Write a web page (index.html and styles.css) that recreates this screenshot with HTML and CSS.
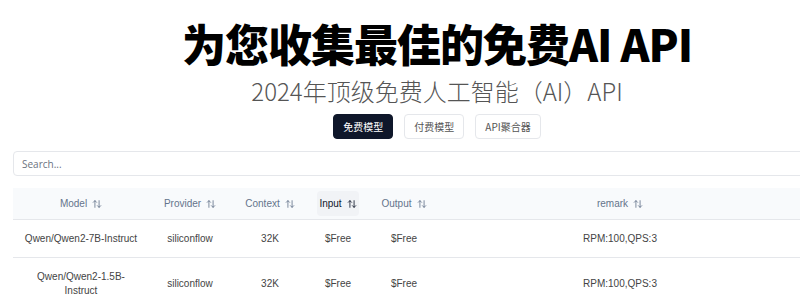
FILE: index.html
```html
<!DOCTYPE html>
<html lang="zh-CN">
  <head>
    <meta charset="UTF-8" />
    <meta name="viewport" content="width=device-width, initial-scale=1.0" />
    <title>免费AI API</title>
    <link rel="stylesheet" href="styles.css">
  </head>
  <body>
    <div class="container">
      <h1 class="title">为您收集最佳的免费AI API</h1>
      <p class="subtitle">2024年顶级免费人工智能（AI）API</p>

      <div class="tabs">
        <button class="tab active">免费模型</button>
        <button class="tab">付费模型</button>
        <button class="tab">API聚合器</button>
      </div>

      <input type="text" class="search-box" placeholder="Search..." />

      <table class="models">
        <colgroup>
          <col style="width: 136px" />
          <col style="width: 82px" />
          <col style="width: 78px" />
          <col style="width: 58px" />
          <col style="width: 74px" />
          <col style="width: 358px" />
          <col />
        </colgroup>
        <thead>
          <tr>
            <th><span class="sort">Model <svg class="sort-icon" viewBox="0 0 24 24"><path d="m21 16-4 4-4-4M17 20V4M3 8l4-4 4 4M7 4v16"/></svg></span></th>
            <th><span class="sort">Provider <svg class="sort-icon" viewBox="0 0 24 24"><path d="m21 16-4 4-4-4M17 20V4M3 8l4-4 4 4M7 4v16"/></svg></span></th>
            <th><span class="sort">Context <svg class="sort-icon" viewBox="0 0 24 24"><path d="m21 16-4 4-4-4M17 20V4M3 8l4-4 4 4M7 4v16"/></svg></span></th>
            <th><span class="sort hover">Input <svg class="sort-icon" viewBox="0 0 24 24"><path d="m21 16-4 4-4-4M17 20V4M3 8l4-4 4 4M7 4v16"/></svg></span></th>
            <th><span class="sort">Output <svg class="sort-icon" viewBox="0 0 24 24"><path d="m21 16-4 4-4-4M17 20V4M3 8l4-4 4 4M7 4v16"/></svg></span></th>
            <th><span class="sort">remark <svg class="sort-icon" viewBox="0 0 24 24"><path d="m21 16-4 4-4-4M17 20V4M3 8l4-4 4 4M7 4v16"/></svg></span></th>
            <th></th>
          </tr>
        </thead>
        <tbody>
          <tr>
            <td>Qwen/Qwen2-7B-Instruct</td>
            <td>siliconflow</td>
            <td>32K</td>
            <td>$Free</td>
            <td>$Free</td>
            <td>RPM:100,QPS:3</td>
            <td></td>
          </tr>
          <tr>
            <td>Qwen/Qwen2-1.5B-Instruct</td>
            <td>siliconflow</td>
            <td>32K</td>
            <td>$Free</td>
            <td>$Free</td>
            <td>RPM:100,QPS:3</td>
            <td></td>
          </tr>
        </tbody>
      </table>
    </div>
  </body>
</html>
```

FILE: styles.css
```css
body {
  margin: 0;
  background-color: #fff;
  color: #333;
  font-family: "Liberation Sans", "Noto Sans CJK SC", sans-serif;
  overflow: hidden;
}

.container {
  width: 848px;
  margin-left: 13px;
  display: flex;
  flex-direction: column;
  align-items: center;
}

.title {
  margin: 13px 0 0;
  font-family: "Noto Sans CJK SC", sans-serif;
  font-size: 44px;
  font-weight: 900;
  line-height: 60px;
  color: #000;
  letter-spacing: -1px;
}

.subtitle {
  margin: 2px 0 0;
  font-family: "Noto Sans CJK SC", sans-serif;
  font-size: 24px;
  font-weight: 300;
  line-height: 32px;
  color: #555;
}

.tabs {
  display: flex;
  gap: 11px;
  margin-top: 7px;
}

.tab {
  height: 25px;
  padding: 0 9px;
  border: 1px solid #e5e7eb;
  border-radius: 4px;
  background-color: #fff;
  color: #555;
  font-family: "Noto Sans CJK SC", sans-serif;
  font-size: 10px;
}

.tab.active {
  background-color: #0f172a;
  border-color: #0f172a;
  color: #fff;
}

.search-box {
  align-self: stretch;
  height: 25px;
  margin-top: 12px;
  padding: 0 8px;
  border: 1px solid #e5e7eb;
  border-radius: 4px;
  box-sizing: border-box;
  font-family: "Open Sans", sans-serif;
  font-size: 10px;
  color: #333;
}

.search-box::placeholder {
  color: #6b7280;
}

.models {
  align-self: stretch;
  margin-top: 12px;
  border-collapse: collapse;
  table-layout: fixed;
  font-size: 10px;
}

.models thead tr {
  background-color: #f8fafc;
  border-bottom: 1px solid #e5e7eb;
}

.models th {
  height: 31px;
  padding: 0;
  font-weight: 400;
  color: #64748b;
}

.sort {
  display: inline-flex;
  align-items: center;
  gap: 5px;
  height: 25px;
  padding: 0 2px;
  border-radius: 4px;
}

.sort.hover {
  background-color: #f1f3f6;
  color: #0f172a;
}

.sort-icon {
  width: 10px;
  height: 10px;
  fill: none;
  stroke: currentColor;
  stroke-width: 2;
  stroke-linecap: round;
  stroke-linejoin: round;
}

.models td {
  padding: 11.5px 9px;
  line-height: 14px;
  text-align: center;
  color: #444;
  border-bottom: 1px solid #e5e7eb;
}
```
